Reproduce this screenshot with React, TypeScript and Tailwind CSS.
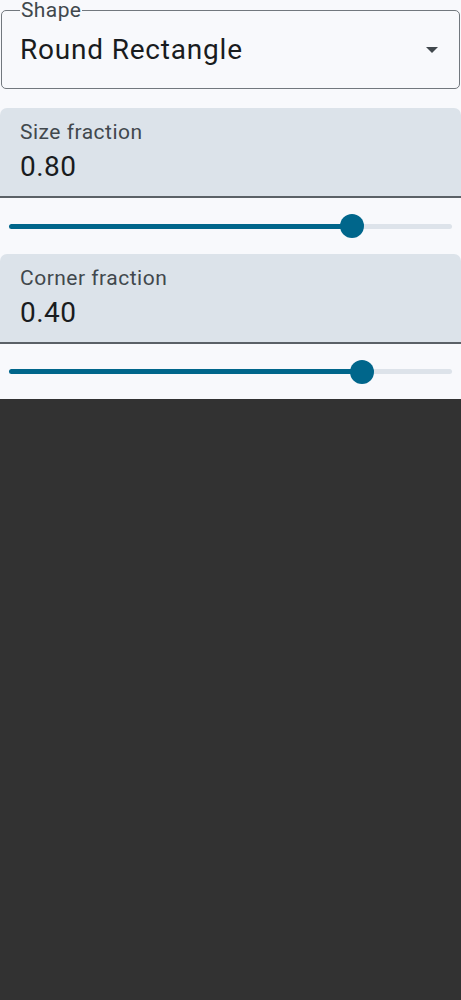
import React from 'react';

const fields = [
  { label: 'Size fraction', value: '0.80', thumb: 352 },
  { label: 'Corner fraction', value: '0.40', thumb: 362 },
];

// thumb is the x of the thumb centre, in px from the left edge
function Slider({ thumb, height }: { thumb: number; height: string }) {
  return (
    <div className={`flex items-center px-[9px] ${height}`}>
      <div className="h-[5px] rounded-l-full bg-[#00668b]" style={{ width: thumb - 9 }} />
      <div className="relative z-10 -mx-[12px] h-[24px] w-[24px] shrink-0 rounded-full bg-[#00668b]" />
      <div className="h-[5px] flex-1 rounded-r-full bg-[#dde3ea]" />
    </div>
  );
}

export default function App() {
  return (
    <div className="min-h-[1000px] bg-[#323232] font-['Roboto',sans-serif]">
      <div className="bg-[#f8f9fc] pt-[10px]">
        <div className="relative mx-px flex h-[79px] items-center rounded-[5px] border border-[#72787e] pl-[18px] pr-[21px]">
          <span className="absolute -top-[13px] left-[18px] bg-[#f8f9fc] px-px text-[21px] leading-[24px] tracking-[0.4px] text-[#41484d]">
            Shape
          </span>
          <span className="flex-1 text-[28px] leading-[36px] tracking-[0.8px] text-[#191c1e]">Round Rectangle</span>
          <svg width="12" height="6" viewBox="0 0 12 6" className="mt-px">
            <path d="M0 0h12L6 6z" fill="#41484d" />
          </svg>
        </div>

        <div className="mt-[19px] flex flex-col">
          {fields.map((f, i) => (
            <div key={f.label} className="flex flex-col">
              <div className="flex flex-col gap-[3px] rounded-t-[7px] border-b-2 border-[#5b6167] bg-[#dce3ea] pl-[20px] pt-[10px] pb-[11px]">
                <div className="text-[21px] leading-[28px] tracking-[0.5px] text-[#41484d]">{f.label}</div>
                <div className="text-[28px] leading-[36px] tracking-[0.5px] text-[#191c1e]">{f.value}</div>
              </div>
              <Slider thumb={f.thumb} height={i === 0 ? 'h-[56px]' : 'h-[55px]'} />
            </div>
          ))}
        </div>
      </div>
    </div>
  );
}
